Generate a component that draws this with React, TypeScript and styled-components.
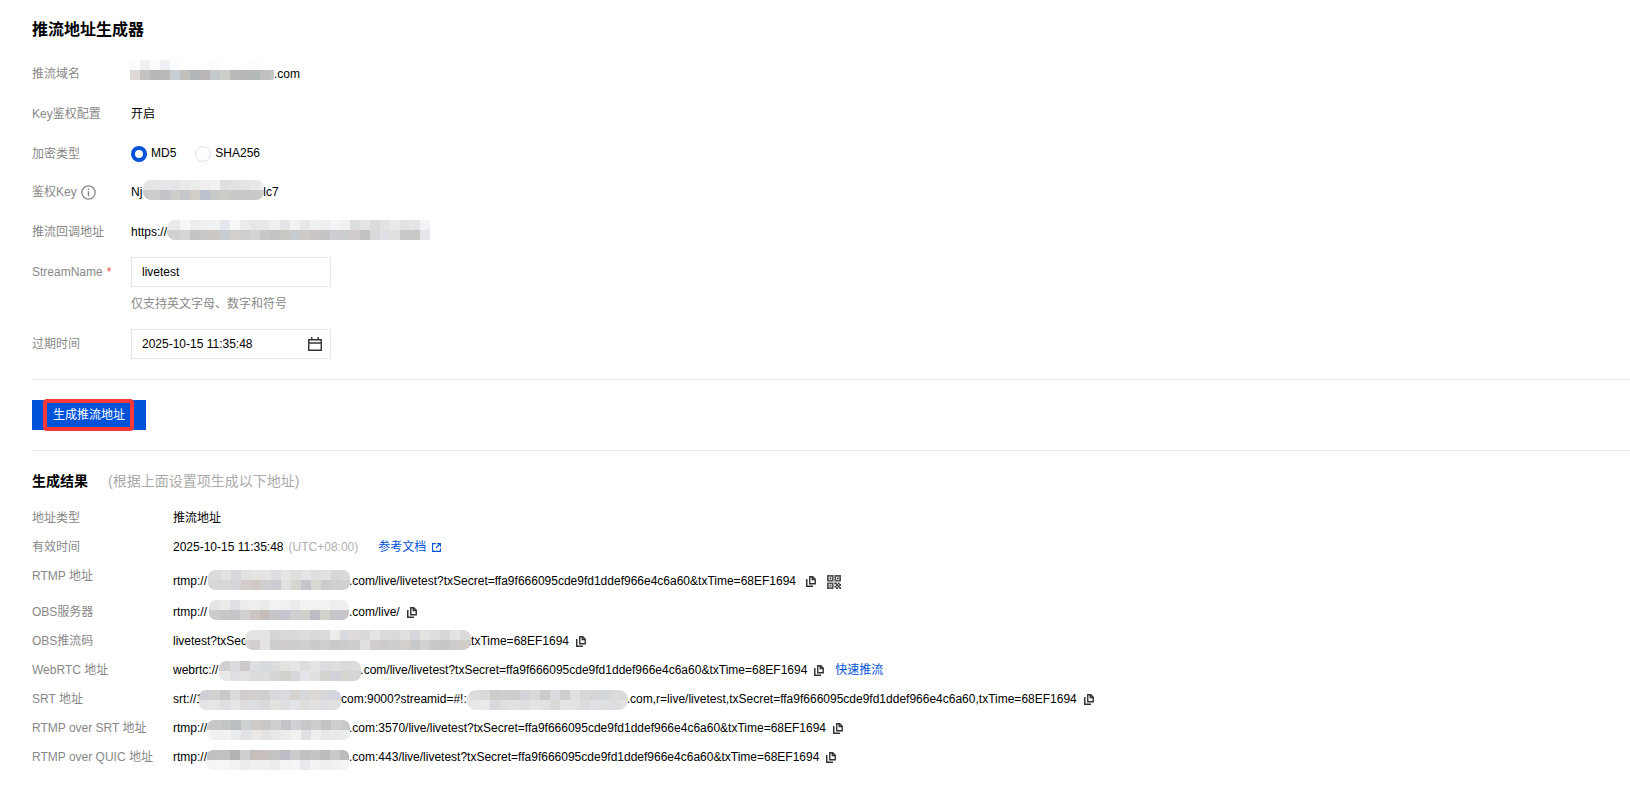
import React, { useId, useState } from "react";
import styled, { createGlobalStyle } from "styled-components";

const GlobalStyle = createGlobalStyle`
  *, *::before, *::after { box-sizing: border-box; }
  body {
    margin: 0;
    background: #fff;
    color: #000;
    font: 12px/20px "Liberation Sans", Arial, "Noto Sans CJK SC", sans-serif;
  }
  input, button { font: inherit; color: inherit; }
`;

const Page = styled.main`
  padding: 20px 0 18px 32px;
`;

const PageTitle = styled.h1`
  margin: 0 0 24px;
  font-size: 16px;
  line-height: 20px;
  font-weight: 700;
`;

const Form = styled.form`
  margin: 0;
`;

const Fields = styled.div`
  display: flex;
  flex-direction: column;
  gap: 20px;
`;

const FieldRow = styled.div<{ $compact?: boolean }>`
  display: grid;
  grid-template-columns: 99px 1fr;
  height: ${(p) => (p.$compact ? "18px" : "auto")};
  line-height: ${(p) => (p.$compact ? "18px" : "20px")};
`;

const FieldName = styled.label`
  display: flex;
  align-items: center;
  height: 20px;
  color: #888;
  white-space: nowrap;
`;

const Required = styled.span`
  margin-left: 4px;
  color: #e54545;
`;

const InfoButton = styled.button`
  display: flex;
  margin: 0 0 0 4px;
  padding: 0;
  border: 0;
  background: none;
  color: #888;
`;

const Value = styled.div`
  display: flex;
  align-items: center;
  height: 20px;
  white-space: pre;
`;

const RadioGroup = styled.div`
  display: flex;
  gap: 19px;
`;

const RadioLabel = styled.label`
  display: flex;
  gap: 4px;
`;

const Radio = styled.input`
  appearance: none;
  width: 16px;
  height: 16px;
  margin: 2px 0 0;
  border: 1px solid #dcdfe6;
  border-radius: 50%;
  background: #fff;
  &:checked { border: 4px solid #0052d9; }
`;

const InputShell = styled.div`
  display: flex;
  align-items: center;
  width: 200px;
  height: 30px;
  margin: -5px 0;
  padding: 0 8px 0 10px;
  border: 1px solid #e2e5ed;
`;

const TextInput = styled.input`
  flex: 1;
  min-width: 0;
  height: 28px;
  padding: 0;
  border: 0;
  outline: 0;
  background: none;
`;

const IconButton = styled.button<{ $gap?: number }>`
  display: flex;
  flex: none;
  margin: 0 0 0 ${(p) => p.$gap ?? 0}px;
  padding: 0;
  border: 0;
  background: none;
  color: #333;
  cursor: pointer;
`;

const Hint = styled.p`
  margin: 12px 0 0;
  color: #888;
`;

const Actions = styled.div`
  display: flex;
  margin-top: 25px;
  padding: 20px 0;
  border: solid #e7eaef;
  border-width: 1px 0;
`;

const PrimaryButton = styled.button`
  position: relative;
  height: 30px;
  padding: 0 21px;
  border: 0;
  background: #0052d9;
  color: #fff;
  cursor: pointer;
`;

const Highlight = styled.span`
  position: absolute;
  inset: -1px 12px -1px 11px;
  border: 4px solid #fb3737;
  border-radius: 4px;
`;

const ResultHeader = styled.div`
  display: flex;
  gap: 20px;
  margin: 20px 0 13px;
  font-size: 14px;
  line-height: 20px;
`;

const ResultTitle = styled.h2`
  margin: 0;
  font-size: 14px;
  font-weight: 700;
`;

const ResultNote = styled.span`
  color: #aaa;
`;

const ResultList = styled.dl`
  margin: 0;
`;

const ResultRow = styled.div<{ $tall?: boolean }>`
  display: grid;
  grid-template-columns: 141px 1fr;
  height: ${(p) => (p.$tall ? 36 : 29)}px;
  line-height: 29px;
`;

const ResultName = styled.dt`
  color: #888;
`;

const ResultValue = styled.dd<{ $tall?: boolean }>`
  display: flex;
  align-items: center;
  height: ${(p) => (p.$tall ? 39 : 29)}px;
  margin: 0;
  white-space: pre;
`;

const Zone = styled.span`
  margin-left: 5px;
  color: #b0b0b0;
`;

const Link = styled.a<{ $gap: number }>`
  display: flex;
  align-items: center;
  gap: 6px;
  margin-left: ${(p) => p.$gap}px;
  color: #0052d9;
  text-decoration: none;
`;

const MosaicSvg = styled.svg<{ $before: number; $after: number }>`
  flex: none;
  position: relative;
  margin: 0 ${(p) => p.$after}px 0 ${(p) => p.$before}px;
`;

type MosaicProps = {
  width: number;
  /** width of the first, partly clipped cell */
  first: number;
  /** vertical distance of the block's middle from the text's middle */
  lift?: number;
  radius?: number;
  squareEnd?: boolean;
  top: string;
  bottom: string;
  before?: number;
  after?: number;
};

/* Two rows of 10px cells that cover a private part of an address. */
function Mosaic({ width, first, lift = 0, radius = 7, squareEnd, top, bottom, before = 0, after = 0 }: MosaicProps) {
  const id = useId();
  const rows = [top.split(" "), bottom.split(" ")];
  const y0 = 4 - lift;
  return (
    <MosaicSvg $before={before} $after={after} width={width} height={28} viewBox={`0 0 ${width} 28`} aria-hidden="true">
      <clipPath id={id}>
        <rect x={0} y={y0} width={squareEnd ? width + 20 : width} height={20} rx={radius} />
      </clipPath>
      <g clipPath={`url(#${id})`} shapeRendering="crispEdges">
        {rows.map((row, r) =>
          row.map((c, i) => (
            <rect key={`${r}-${i}`} x={first - 10 + i * 10} y={y0 + r * 10} width={10} height={10} fill={`#${c}`} />
          ))
        )}
      </g>
    </MosaicSvg>
  );
}

const InfoIcon = () => (
  <svg width="15" height="15" viewBox="0 0 15 15" fill="none" stroke="currentColor" aria-hidden="true">
    <circle cx="7.5" cy="7.5" r="6.6" strokeWidth="1.3" />
    <path d="M7.5 3.5v1.6M7.5 6.2v5.1" strokeWidth="1.4" />
  </svg>
);

const CalendarIcon = () => (
  <svg width="14" height="14" viewBox="0 0 14 14" fill="none" stroke="currentColor" aria-hidden="true">
    <path d="M.75 2.75h12.5v10.5H.75zM.75 6h12.5M3.75 0v3M10.25 0v3" strokeWidth="1.4" />
  </svg>
);

const CopyIcon = () => (
  <svg width="10" height="11" viewBox="0 0 10 11" fill="none" stroke="currentColor" aria-hidden="true">
    <path d="M3.75.75h3L9.25 3.2v4.55h-5.5zM6.3.75v2.7h2.9" strokeWidth="1.4" />
    <path d="M.75 3v7.25H7" strokeWidth="1.5" />
  </svg>
);

const ExternalIcon = () => (
  <svg width="9" height="9" viewBox="0 0 9 9" fill="none" stroke="currentColor" aria-hidden="true">
    <path d="M3.8.6H.6v7.8h7.8V5.2M5.2.6h3.2v3.2M8.3.7 4 5" strokeWidth="1.1" />
  </svg>
);

const QrIcon = () => (
  <svg width="14" height="14" viewBox="0 0 14 14" aria-hidden="true">
    <g fill="none" stroke="#555" strokeWidth="1.8">
      <path d="M.9.9h4.8v4.8H.9zM8.3.9h4.8v4.8H8.3zM.9 8.3h4.8v4.8H.9z" />
    </g>
    <path
      fill="#333"
      d="M2.6 2.6h1.5v1.5H2.6zM10 2.6h1.5v1.5H10zM2.6 10h1.5v1.5H2.6zM7.4 7.4h2.4v1.9H7.4zM10.8 7.4h1.8v1.7h-1.8zM9.2 9.1h2v1.9h-2zM12.2 9H14v1.8h-1.8zM7.4 10.8h2v1.7h-2zM10.7 10.6h2v2h-2zM9.2 12.3h1.7V14H9.2zM12.4 12.2H14V14h-1.6z"
    />
  </svg>
);

const Copy = ({ gap = 7 }: { gap?: number }) => (
  <IconButton $gap={gap} type="button" aria-label="复制">
    <CopyIcon />
  </IconButton>
);

const SECRET = "txSecret=ffa9f666095cde9fd1ddef966e4c6a60";
const TIME = "txTime=68EF1694";

export default function App() {
  const [type, setType] = useState("MD5");
  const [stream, setStream] = useState("livetest");
  const [expires, setExpires] = useState("2025-10-15 11:35:48");

  return (
    <Page>
      <GlobalStyle />
      <PageTitle>推流地址生成器</PageTitle>
      <Form onSubmit={(e) => e.preventDefault()}>
        <Fields>
          <FieldRow>
            <FieldName as="span">推流域名</FieldName>
            <Value>
              <Mosaic
                width={144} first={10} lift={4} radius={2} before={-1}
                top="fcfcfd eef0f3 fcfbfa eff1f4 fbfcfd ffffff ffffff ffffff fcfcfd ffffff ffffff ffffff fcfcfd ffffff fdfdfd"
                bottom="ded9d7 c3c2c1 b7b7ba bbb9b8 c8cfd4 c1c0bc b4b7ba bab6b6 c5c8cd cfcfca bbb9bb b7b7b9 b4b9ba c1bfc1 c5c5c4"
              />
              .com
            </Value>
          </FieldRow>
          <FieldRow>
            <FieldName as="span">Key鉴权配置</FieldName>
            <Value>开启</Value>
          </FieldRow>
          <FieldRow $compact>
            <FieldName as="span" id="type-name">加密类型</FieldName>
            <RadioGroup role="radiogroup" aria-labelledby="type-name">
              {["MD5", "SHA256"].map((name) => (
                <RadioLabel key={name}>
                  <Radio type="radio" name="type" checked={type === name} onChange={() => setType(name)} />
                  {name}
                </RadioLabel>
              ))}
            </RadioGroup>
          </FieldRow>
          <FieldRow>
            <FieldName as="span">
              鉴权Key
              <InfoButton type="button" aria-label="说明">
                <InfoIcon />
              </InfoButton>
            </FieldName>
            <Value>
              Nj
              <Mosaic
                width={121} first={7} lift={2} radius={8} before={1} after={-1}
                top="e4e5e5 e4e5e5 e7e7e9 e4e5e8 eaeae8 ecebec f0efee f1f2f4 dfdfde e2e2e1 e5e4e4 e8e8e9 ededec eaeae9"
                bottom="c9cacc cfcdcb c3c5ca cdcdcc c5c7cb d3cdc8 bcc3cf c9c9ca cdcbc8 c9c9c8 c7c8c7 c9c9c9 cdcdcb cfcecc"
              />
              lc7
            </Value>
          </FieldRow>
          <FieldRow>
            <FieldName as="span">推流回调地址</FieldName>
            <Value>
              https://
              <Mosaic
                width={263} first={3} lift={2} radius={8} squareEnd
                top="e9eaea e9ebea f5f8f6 ededee f1f0ef f1f2f3 e4e7eb f6f7f6 ebecec e6e8e6 e8e9e7 efefed e4e5e7 f1f3f3 e7e9e9 f0f1f2 edeeed f3f4f6 f1f1f1 dddee0 e4e4e5 dbdbde e3e3e3 e9e9e9 e1e1e0 e4e5e7 f2f3f6"
                bottom="cfd2d0 cfd2d0 d4d7d5 c3c4c3 cac9c7 cdc8c3 c8cccf d3cfcc cecece d3d4d3 c6c8c6 c5c3c3 cac9c6 c8ccce cdcbc8 c9c6c5 c3c4c6 ceced2 cbcdcd cfcccb c1c2c2 d9dadb dee0e3 e0dfdd c8c8c7 c8c7c6 e4e5e9"
              />
            </Value>
          </FieldRow>
          <FieldRow>
            <FieldName htmlFor="stream">
              StreamName <Required>*</Required>
            </FieldName>
            <div>
              <InputShell>
                <TextInput id="stream" value={stream} onChange={(e) => setStream(e.target.value)} />
              </InputShell>
              <Hint>仅支持英文字母、数字和符号</Hint>
            </div>
          </FieldRow>
          <FieldRow>
            <FieldName htmlFor="expires">过期时间</FieldName>
            <InputShell>
              <TextInput id="expires" value={expires} onChange={(e) => setExpires(e.target.value)} />
              <IconButton type="button" aria-label="选择时间">
                <CalendarIcon />
              </IconButton>
            </InputShell>
          </FieldRow>
        </Fields>
        <Actions>
          <PrimaryButton type="submit">
            生成推流地址
            <Highlight />
          </PrimaryButton>
        </Actions>
      </Form>

      <ResultHeader>
        <ResultTitle>生成结果</ResultTitle>
        <ResultNote>(根据上面设置项生成以下地址)</ResultNote>
      </ResultHeader>
      <ResultList>
        <ResultRow>
          <ResultName>地址类型</ResultName>
          <ResultValue>推流地址</ResultValue>
        </ResultRow>
        <ResultRow>
          <ResultName>有效时间</ResultName>
          <ResultValue>
            2025-10-15 11:35:48
            <Zone>(UTC+08:00)</Zone>
            <Link href="#docs" $gap={20}>
              参考文档
              <ExternalIcon />
            </Link>
          </ResultValue>
        </ResultRow>
        <ResultRow $tall>
          <ResultName>RTMP 地址</ResultName>
          <ResultValue $tall>
            rtmp://
            <Mosaic
              width={142} first={3} lift={2} before={1} after={-1}
              top="dadbdd dadbdd e3e2e0 d5d7da e2e2e3 e5e4e2 e4e4e4 dcdde1 e4e5e4 dfdfde e4e5e6 dedfe1 e2e2e2 d7d7d8 d9d9d8"
              bottom="d4d5d8 d6d7d9 d7d7d6 d3d5d8 d3cecb cfcac6 cfcfd1 cbccd1 e0e0e0 d6d6d0 c5c6cb d9d9d3 cbccd0 d0d0d0 d1d1d1"
            />
            .com/live/livetest?{SECRET}&{TIME}
            <Copy gap={10} />
            <IconButton $gap={11} type="button" aria-label="二维码">
              <QrIcon />
            </IconButton>
          </ResultValue>
        </ResultRow>
        <ResultRow>
          <ResultName>OBS服务器</ResultName>
          <ResultValue>
            rtmp://
            <Mosaic
              width={140} first={1} lift={3} before={2}
              top="e2e3e5 e4e5e7 ebeae9 dfe0e3 ededee efeeed ebebeb f3f3f3 f0f0f1 ebebeb f2f2f2 f2f2f3 f4f3f3 eeeeee efefef"
              bottom="c9c9c9 cbcbcb c8c7c7 c4c5c9 d1d1d2 cbc5c3 c4bdba c6c6cb c4c5ce cecfd1 d0d0cb bdbcc3 d3d3ce c6c5ca c6c5cb"
            />
            .com/live/
            <Copy />
          </ResultValue>
        </ResultRow>
        <ResultRow>
          <ResultName>OBS推流码</ResultName>
          <ResultValue>
            livetest?txSec
            <Mosaic
              width={226} first={5} lift={2} radius={8} before={-2} after={-8}
              top="e4e3e4 e4e3e4 e5e4e3 d5d6d8 d9d9d8 d7d8da ddddde d8d9da dbdbda ebedea d9dadd dedbda dad9db e3e3e3 dbdbda d9dadc e0e0df d6d7da e3e3e2 dddde0 d8d8da e3e3e3 dbdbdb dbdbdb"
              bottom="d6d5d3 d2cfce e6e4e3 cdcdcb cfcccb cccccd d1d0cf c9cac9 cfcfcf c9c9ca cbcbcb cfcccf e0e0e1 d3cfce cccbcb cdcdce d3cfcc c8c9ca d1d1d0 c9c9c7 c6c7c6 cccccc d1ceca d1ceca"
            />
            &{TIME}
            <Copy />
          </ResultValue>
        </ResultRow>
        <ResultRow>
          <ResultName>WebRTC 地址</ResultName>
          <ResultValue>
            webrtc://
            <Mosaic
              width={142} first={1} before={1} after={-1}
              top="d4d1d2 d2cfd0 dadbdf cecaca dddfe2 d6d9dd dcdcdc e3e2e0 e7e6e2 dcdddd e2e3e4 dcdbdf dddedd dcdad9 dcdbda dcdbda"
              bottom="e5e5e5 e8e8e8 dddfe3 e0e1e3 dbdbdc dddddd d5d6d3 d1d0ca d7d7d9 e3e5ea dedfdf d4d3d0 d2d2da d5d5d2 d5d6d8 d5d6d8"
            />
            .com/live/livetest?{SECRET}&{TIME}
            <Copy />
            <Link href="#push" $gap={11}>快速推流</Link>
          </ResultValue>
        </ResultRow>
        <ResultRow>
          <ResultName>SRT 地址</ResultName>
          <ResultValue>
            srt://1
            <Mosaic
              width={142} first={1} before={-4}
              top="cfcfd7 cfcfd7 d2d1d1 c8cac9 dadadb d0cdcc d3cfcf cfcfd0 d8d9dc d9dadd d5d1cf d6d7d9 dcd8d4 d7d7da d2d5dc d2d5dc"
              bottom="e3e3e5 e4e4e6 e5e5e6 dddfe2 e6e5e5 dddddf dcdee1 d8dadb e4e2df dddfe0 e3e4e7 dddddc e1e0df dcdee1 e0e0e1 e0e0e1"
            />
            com:9000?streamid=#!:
            <Mosaic
              width={161} first={3} radius={9} after={-1}
              top="e5e6e6 dcdcdd d9d9d9 cecccb ccced0 cfcdcb d3d4da d8d9d8 cbcbcc d9dbde cfcecd e0e0df d7d8d9 d6d6d9 d4d7d9 dadad9 d9dadc"
              bottom="e5e5e5 e8e8e8 e9e9ea d7d9dc dfdfdf e2e2e1 dedfe1 e4e4e5 e1e1e1 d9d9d8 e4e4e3 e2e2e5 dadbdd e0e1e4 dedfe0 dcdde0 e1e1e2"
            />
            .com,r=live/livetest,{SECRET},{TIME}
            <Copy />
          </ResultValue>
        </ResultRow>
        <ResultRow>
          <ResultName>RTMP over SRT 地址</ResultName>
          <ResultValue>
            rtmp://
            <Mosaic
              width={143} first={4} lift={-1} after={-1}
              top="c6cac9 c6c9c8 c2c5c4 b9bec0 cfd0d2 cdcac8 cac7c7 cecfd0 c3c3ca d0d1d4 c7c8c8 cfcdcb c5c2c3 d0cdcd c7c9c9"
              bottom="f5f6f6 f1f1f0 f2f2f2 e9eaec e2e3e6 ebe7e5 e3e3e3 e7e8ea ecebec f0f0ef e0e1e5 eeeeee e6e8e8 e8eaea e8ebea"
            />
            .com:3570/live/livetest?{SECRET}&{TIME}
            <Copy />
          </ResultValue>
        </ResultRow>
        <ResultRow>
          <ResultName>RTMP over QUIC 地址</ResultName>
          <ResultValue>
            rtmp://
            <Mosaic
              width={142} first={3} lift={-2} radius={6}
              top="bfc1c0 bfc1c0 c3c2c1 b2b3b5 ceced0 c4bfbd c7c0bd c3c3c6 bebdc5 cacbcd c1c1c1 c7c4c4 bcbcbe cbcaca bbbdbd"
              bottom="f4f5f5 f4f5f5 f6f7f6 f1f2f3 ebecee f0f0ef efefee ebecee f4f4f4 f6f6f6 e8e9ec f1f2f2 efefef f0f1f2 f3f4f4"
            />
            .com:443/live/livetest?{SECRET}&{TIME}
            <Copy />
          </ResultValue>
        </ResultRow>
      </ResultList>
    </Page>
  );
}
